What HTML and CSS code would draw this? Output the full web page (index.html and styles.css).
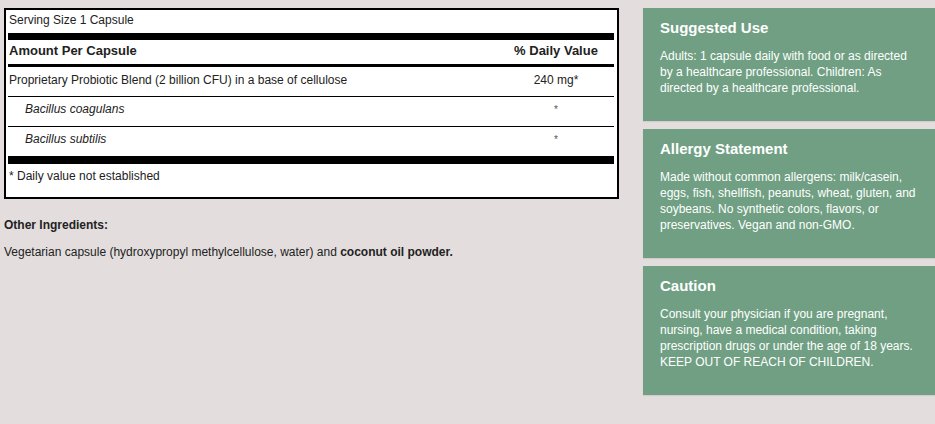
FILE: index.html
```html
<!DOCTYPE html>
<html lang="en">
<head>
<meta charset="utf-8">
<title>Supplement Facts</title>
<link rel="stylesheet" href="styles.css">
</head>
<body>
<div class="page">
  <main class="main">
    <section class="facts">
      <div class="serving">Serving Size 1 Capsule</div>
      <div class="bar bar-thick"></div>
      <div class="row head">
        <span class="name">Amount Per Capsule</span>
        <span class="dv">% Daily Value</span>
      </div>
      <div class="bar bar-mid"></div>
      <div class="row item first">
        <span class="name">Proprietary Probiotic Blend (2 billion CFU) in a base of cellulose</span>
        <span class="dv">240 mg*</span>
      </div>
      <div class="row item sub">
        <span class="name">Bacillus coagulans</span>
        <span class="dv star">*</span>
      </div>
      <div class="row item sub">
        <span class="name">Bacillus subtilis</span>
        <span class="dv star">*</span>
      </div>
      <div class="bar bar-thick"></div>
      <div class="footnote">* Daily value not established</div>
    </section>
    <h4 class="other-title">Other Ingredients:</h4>
    <p class="other-text">Vegetarian capsule (hydroxypropyl methylcellulose, water) and <strong>coconut oil powder.</strong></p>
  </main>
  <aside class="side">
    <div class="panel">
      <h3>Suggested Use</h3>
      <p>Adults: 1 capsule daily with food or as directed by a healthcare professional. Children: As directed by a healthcare professional.</p>
    </div>
    <div class="panel">
      <h3>Allergy Statement</h3>
      <p>Made without common allergens: milk/casein, eggs, fish, shellfish, peanuts, wheat, gluten, and soybeans. No synthetic colors, flavors, or preservatives. Vegan and non-GMO.</p>
    </div>
    <div class="panel">
      <h3>Caution</h3>
      <p>Consult your physician if you are pregnant, nursing, have a medical condition, taking prescription drugs or under the age of 18 years. KEEP OUT OF REACH OF CHILDREN.</p>
    </div>
  </aside>
</div>
</body>
</html>
```

FILE: styles.css
```css
html, body {
  margin: 0;
  padding: 0;
}

body {
  background: #e3dedd;
  font-family: "Liberation Sans", Arial, sans-serif;
  color: #222;
  overflow: hidden;
  height: 424px;
}

.page {
  display: flex;
  align-items: flex-start;
  gap: 24px;
  padding: 8px 0 0 4px;
}

.main {
  width: 615px;
  flex: none;
}

.facts {
  background: #fff;
  border: 2px solid #000;
  padding: 3px 3px 14px 2px;
  font-size: 12px;
  line-height: 14px;
}

.serving {
  padding-left: 1px;
}

.bar {
  background: #000;
}

.bar-thick {
  height: 7px;
  margin-top: 6px;
}

.bar-mid {
  height: 3px;
  margin-top: 6px;
}

.row {
  display: flex;
  align-items: baseline;
  padding-left: 1px;
}

.row .name {
  flex: 1;
}

.row .dv {
  width: 116px;
  text-align: center;
}

.head {
  font-weight: bold;
  font-size: 13px;
  line-height: 15px;
  margin-top: 3px;
}

.item {
  padding-top: 5px;
  padding-bottom: 9px;
}

.item.first {
  padding-top: 6px;
}

.item + .item {
  border-top: 1px solid #000;
}

.sub .name {
  font-style: italic;
  padding-left: 16px;
}

.star {
  font-size: 10px;
  color: #555;
}

.item + .bar-thick {
  margin-top: 0;
  height: 8px;
}

.footnote {
  margin-top: 5px;
  padding-left: 1px;
}

.other-title {
  margin: 19px 0 0;
  font-size: 12px;
  line-height: 14px;
  font-weight: bold;
  color: #222;
}

.other-text {
  margin: 13px 0 0;
  font-size: 12px;
  line-height: 14px;
  color: #222;
}

.other-text strong {
  color: #222;
}

.side {
  width: 292px;
  flex: none;
  display: flex;
  flex-direction: column;
  gap: 8px;
}

.panel {
  background: #709f83;
  color: #fff;
  padding: 11px 13px 25px 17px;
  box-shadow: 0 1px 1px rgba(0, 0, 0, 0.08);
}

.panel h3 {
  margin: 0;
  font-size: 15px;
  line-height: 18px;
  font-weight: bold;
}

.panel p {
  margin: 11px 0 0;
  font-size: 12px;
  line-height: 16px;
}
```
